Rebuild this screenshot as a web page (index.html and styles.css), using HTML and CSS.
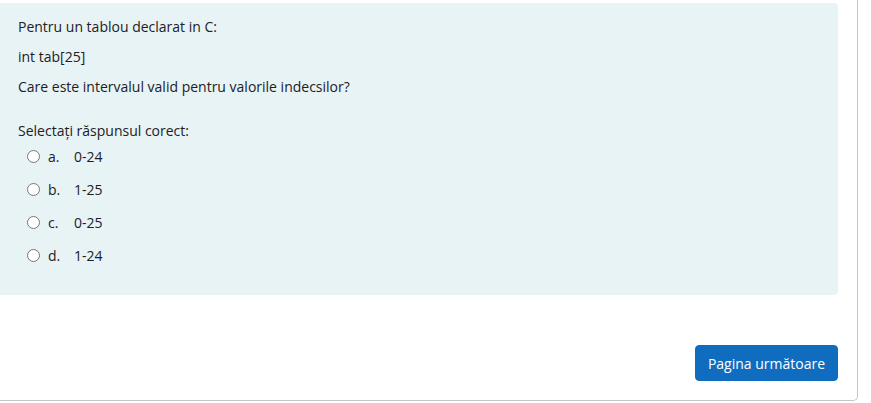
FILE: index.html
```html
<!DOCTYPE html>
<html lang="ro">
<head>
<meta charset="utf-8">
<link rel="stylesheet" href="styles.css">
</head>
<body>
<div class="page">
  <div class="formulation">
    <p>Pentru un tablou declarat in C:</p>
    <p>int tab[25]</p>
    <p>Care este intervalul valid pentru valorile indecsilor?</p>
    <div class="prompt">Selectați răspunsul corect:</div>
    <div class="answers">
      <label class="opt"><input type="radio" name="q"><span class="num">a.</span><span>0-24</span></label>
      <label class="opt"><input type="radio" name="q"><span class="num">b.</span><span>1-25</span></label>
      <label class="opt"><input type="radio" name="q"><span class="num">c.</span><span>0-25</span></label>
      <label class="opt"><input type="radio" name="q"><span class="num">d.</span><span>1-24</span></label>
    </div>
  </div>
  <div class="nav">
    <button class="next" type="button">Pagina următoare</button>
  </div>
</div>
</body>
</html>
```
FILE: styles.css
```css
html, body {
  margin: 0;
  padding: 0;
  background: #fff;
}
body {
  font-family: "Open Sans", "Noto Sans", sans-serif;
  font-size: 14px;
  color: #1d2125;
}
.page {
  width: 858px;
  height: 401px;
  box-sizing: border-box;
  border-right: 1px solid #c5c5c5;
  border-bottom: 1px solid #c5c5c5;
  border-bottom-right-radius: 5px;
  padding-top: 3px;
}
.formulation {
  width: 838px;
  box-sizing: border-box;
  height: 292px;
  background: #e7f3f5;
  border-radius: 0 4px 4px 0;
  padding: 13px 18px;
}
.formulation p {
  margin: 0 0 8px;
  line-height: 22px;
}
.prompt {
  margin-top: 22px;
  line-height: 22px;
}
.answers {
  display: flex;
  flex-direction: column;
  padding-left: 9px;
  margin-top: -2px;
}
.opt {
  display: flex;
  align-items: center;
  height: 33px;
  line-height: 22px;
}
.opt input {
  margin: 0 8px 0 0;
  width: 13px;
  height: 13px;
}
.num {
  width: 26px;
}
.nav {
  display: flex;
  justify-content: flex-end;
  width: 838px;
  margin-top: 50px;
}
.next {
  width: 143px;
  height: 36px;
  background: #0f6cbf;
  color: #fff;
  border: 1px solid #0f6cbf;
  border-radius: 4px;
  font-family: inherit;
  font-size: 14px;
  padding: 0;
}
```
